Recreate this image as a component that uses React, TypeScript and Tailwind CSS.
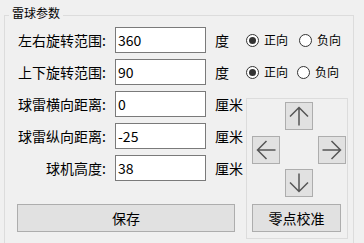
import React from "react";

const fields = [
  { label: "左右旋转范围:", value: "360", unit: "度" },
  { label: "上下旋转范围:", value: "90", unit: "度" },
  { label: "球雷横向距离:", value: "0", unit: "厘米" },
  { label: "球雷纵向距离:", value: "-25", unit: "厘米" },
  { label: "球机高度:", value: "38", unit: "厘米" },
];

function Radio({ label, checked }: { label: string; checked?: boolean }) {
  return (
    <label className="flex items-center gap-[5px]">
      <span className="flex h-[13px] w-[13px] items-center justify-center rounded-full border border-[#333333] bg-white">
        {checked && <span className="h-[7px] w-[7px] rounded-full bg-[#333333]" />}
      </span>
      <span className="text-[12px] leading-[16px] text-black">{label}</span>
    </label>
  );
}

function Arrow({ dir }: { dir: "up" | "down" | "left" | "right" }) {
  const rot = { up: "rotate-0", right: "rotate-90", down: "rotate-180", left: "-rotate-90" }[dir];
  return (
    <button className="flex h-[28px] w-[28px] items-center justify-center border border-[#adadad] bg-[#e1e1e1]">
      <svg width="20" height="20" viewBox="0 0 20 20" className={rot}>
        <path d="M10 1.5V19.5M1 10.5L10 1.5L19 10.5" fill="none" stroke="#555555" strokeWidth="1.5" />
      </svg>
    </button>
  );
}

export default function App() {
  return (
    <div
      className="h-[243px] w-[364px] overflow-hidden bg-[#f0f0f0] pl-[4px] pt-[15px] text-black"
      style={{ fontFamily: '"Noto Sans CJK SC", "Noto Sans", sans-serif' }}
    >
      <div className="relative h-[240px] w-[350px] border border-[#dcdcdc]">
        <span className="absolute left-[4px] top-[-11px] bg-[#f0f0f0] px-[3px] text-[12px] leading-[16px]">
          雷球参数
        </span>

        <div className="flex pt-[11px]">
          {/* left: fields + save */}
          <div className="w-[241px]">
            <div className="flex flex-col gap-[6px]">
              {fields.map((f) => (
                <div key={f.label} className="flex h-[26px] items-center">
                  <span className="w-[110px] pr-[9px] text-right text-[14px] leading-[20px]">{f.label}</span>
                  <input
                    readOnly
                    value={f.value}
                    className="h-[26px] w-[91px] border border-[#7a7a7a] bg-white px-[2px] text-[14px] outline-none"
                  />
                  <span className="ml-[9px] text-[14px] leading-[20px]">{f.unit}</span>
                </div>
              ))}
            </div>
            <button className="ml-[12px] mt-[23px] h-[28px] w-[218px] border border-[#adadad] bg-[#e1e1e1] text-[14px]">
              保存
            </button>
          </div>

          {/* right: direction radios + jog panel */}
          <div className="flex flex-col">
            <div className="flex h-[26px] items-center gap-[11px]">
              <Radio label="正向" checked />
              <Radio label="负向" />
            </div>
            <div className="mt-[6px] flex h-[26px] items-center gap-[9px]">
              <Radio label="正向" checked />
              <Radio label="负向" />
            </div>
            <div className="mt-[13px] h-[141px] w-[102px] border border-[#dcdcdc] pl-[5px] pt-[3px]">
              <div className="grid grid-cols-[28px_28px_28px] gap-x-[5px] gap-y-[6px]">
                <div />
                <Arrow dir="up" />
                <div />
                <Arrow dir="left" />
                <div />
                <Arrow dir="right" />
                <div />
                <div className="-mt-[1px]">
                  <Arrow dir="down" />
                </div>
                <div />
              </div>
              <button className="mt-[7px] h-[28px] w-[89px] border border-[#adadad] bg-[#e1e1e1] text-[14px]">
                零点校准
              </button>
            </div>
          </div>
        </div>
      </div>
    </div>
  );
}
